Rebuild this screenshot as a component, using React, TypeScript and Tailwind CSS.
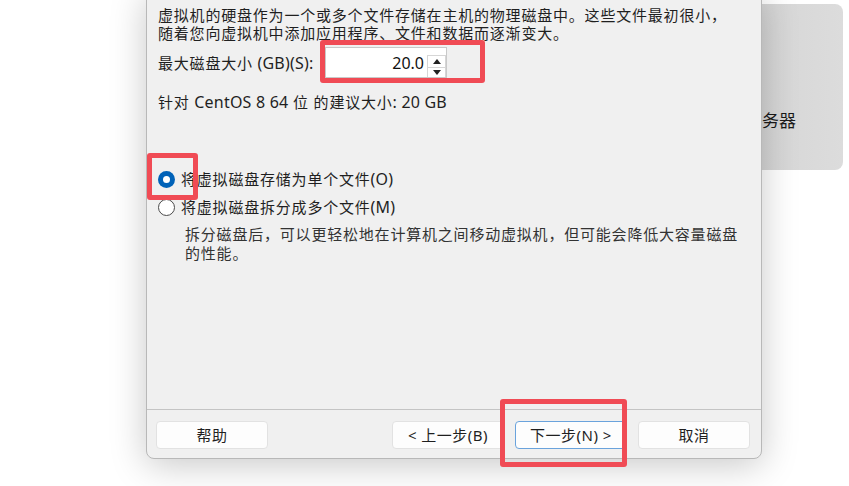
import React from "react";

const font = { fontFamily: '"Noto Sans", "Noto Sans CJK SC", sans-serif' };

function L({ children }: { children: React.ReactNode }) {
  return <span className="text-[16px] tracking-[0.2px]">{children}</span>;
}

function Btn({ children, primary }: { children: React.ReactNode; primary?: boolean }) {
  return (
    <div
      className={
        "flex h-[28px] w-[112px] items-center justify-center rounded-[4px] bg-[#fdfdfd] text-[15px] tracking-[0.5px] text-[#1f1f1f] " +
        (primary ? "border border-[#6aa3dc]" : "border border-[#e2e2e2]")
      }
    >
      {children}
    </div>
  );
}

export default function App() {
  return (
    <div className="relative h-[486px] w-[849px] overflow-hidden bg-white" style={font}>
      {/* background card */}
      <div className="absolute left-[600px] top-[4px] h-[166px] w-[243px] overflow-hidden rounded-[8px] bg-gradient-to-r from-[#c4c4c4] via-[#d3d3d3] to-[#dcdcdc]">
        <div className="absolute left-[145px] top-[106px] text-[17px] leading-[22px] text-[#1a1a1a]">服务器</div>
      </div>

      {/* dialog */}
      <div className="absolute left-[146px] top-[-10px] flex h-[469px] w-[616px] flex-col rounded-b-[8px] border border-[#b8b8b8] bg-[#f0f0f0] shadow-[0_6px_36px_rgba(0,0,0,0.22)]">
        <div className="flex flex-1 flex-col pl-[11px] pt-[15px] text-[15px] leading-[18px] tracking-[0.8px] text-[#1f1f1f]">
          <div>
            虚拟机的硬盘作为一个或多个文件存储在主机的物理磁盘中。这些文件最初很小，
            <br />
            随着您向虚拟机中添加应用程序、文件和数据而逐渐变大。
          </div>
          <div className="mt-[5px] flex h-[31px] items-center">
            <div className="w-[167px]">
              最大磁盘大小 <L>(GB)(S):</L>
            </div>
            <div className="flex h-[31px] w-[122px] items-stretch border border-[#c9c9c9] bg-white">
              <div className="flex flex-1 items-center justify-end pr-[3px] text-[16px] tracking-normal text-[#111]">20.0</div>
              <div className="flex w-[19px] flex-col pt-[7px]">
                <div className="flex h-[13px] items-center justify-center border border-[#d6d6d6]">
                  <div className="h-0 w-0 border-x-[4px] border-b-[5px] border-x-transparent border-b-[#222]" />
                </div>
                <div className="flex flex-1 items-center justify-center border border-t-0 border-b-0 border-[#d6d6d6]">
                  <div className="h-0 w-0 border-x-[4px] border-t-[5px] border-x-transparent border-t-[#222]" />
                </div>
              </div>
            </div>
          </div>
          <div className="mt-[15px]">
            针对 <L>CentOS 8 64</L> 位 的建议大小<L>: 20 GB</L>
          </div>

          <div className="mt-[58px] flex h-[20px] items-center">
            <div className="flex h-[17px] w-[17px] items-center justify-center rounded-full bg-[#0062b8]">
              <div className="h-[7px] w-[7px] rounded-full bg-white" />
            </div>
            <div className="ml-[6px]">
              将虚拟磁盘存储为单个文件<L>(O)</L>
            </div>
          </div>
          <div className="mt-[8px] flex h-[20px] items-center">
            <div className="h-[17px] w-[17px] rounded-full border border-[#4a4a4a] bg-white" />
            <div className="ml-[6px]">
              将虚拟磁盘拆分成多个文件<L>(M)</L>
            </div>
          </div>
          <div className="ml-[27px] mt-[8px] leading-[19px] text-[#333]">
            拆分磁盘后，可以更轻松地在计算机之间移动虚拟机，但可能会降低大容量磁盘
            <br />
            的性能。
          </div>
        </div>

        <div className="flex h-[49px] items-start border-t border-[#c4c4c4] pl-[9px] pr-[11px] pt-[11px]">
          <Btn>帮助</Btn>
          <div className="ml-auto flex gap-[11px]">
            <Btn>&lt; 上一步(B)</Btn>
            <Btn primary>下一步(N) &gt;</Btn>
            <Btn>取消</Btn>
          </div>
        </div>
      </div>

      {/* annotation boxes */}
      <div className="absolute left-[320px] top-[40px] h-[43px] w-[165px] rounded-[3px] border-[5px] border-[#f04b55]" />
      <div className="absolute left-[147px] top-[153px] h-[47px] w-[51px] rounded-[3px] border-[5px] border-[#f04b55]" />
      <div className="absolute left-[500px] top-[399px] h-[68px] w-[127px] rounded-[3px] border-[5px] border-[#f04b55]" />
    </div>
  );
}
